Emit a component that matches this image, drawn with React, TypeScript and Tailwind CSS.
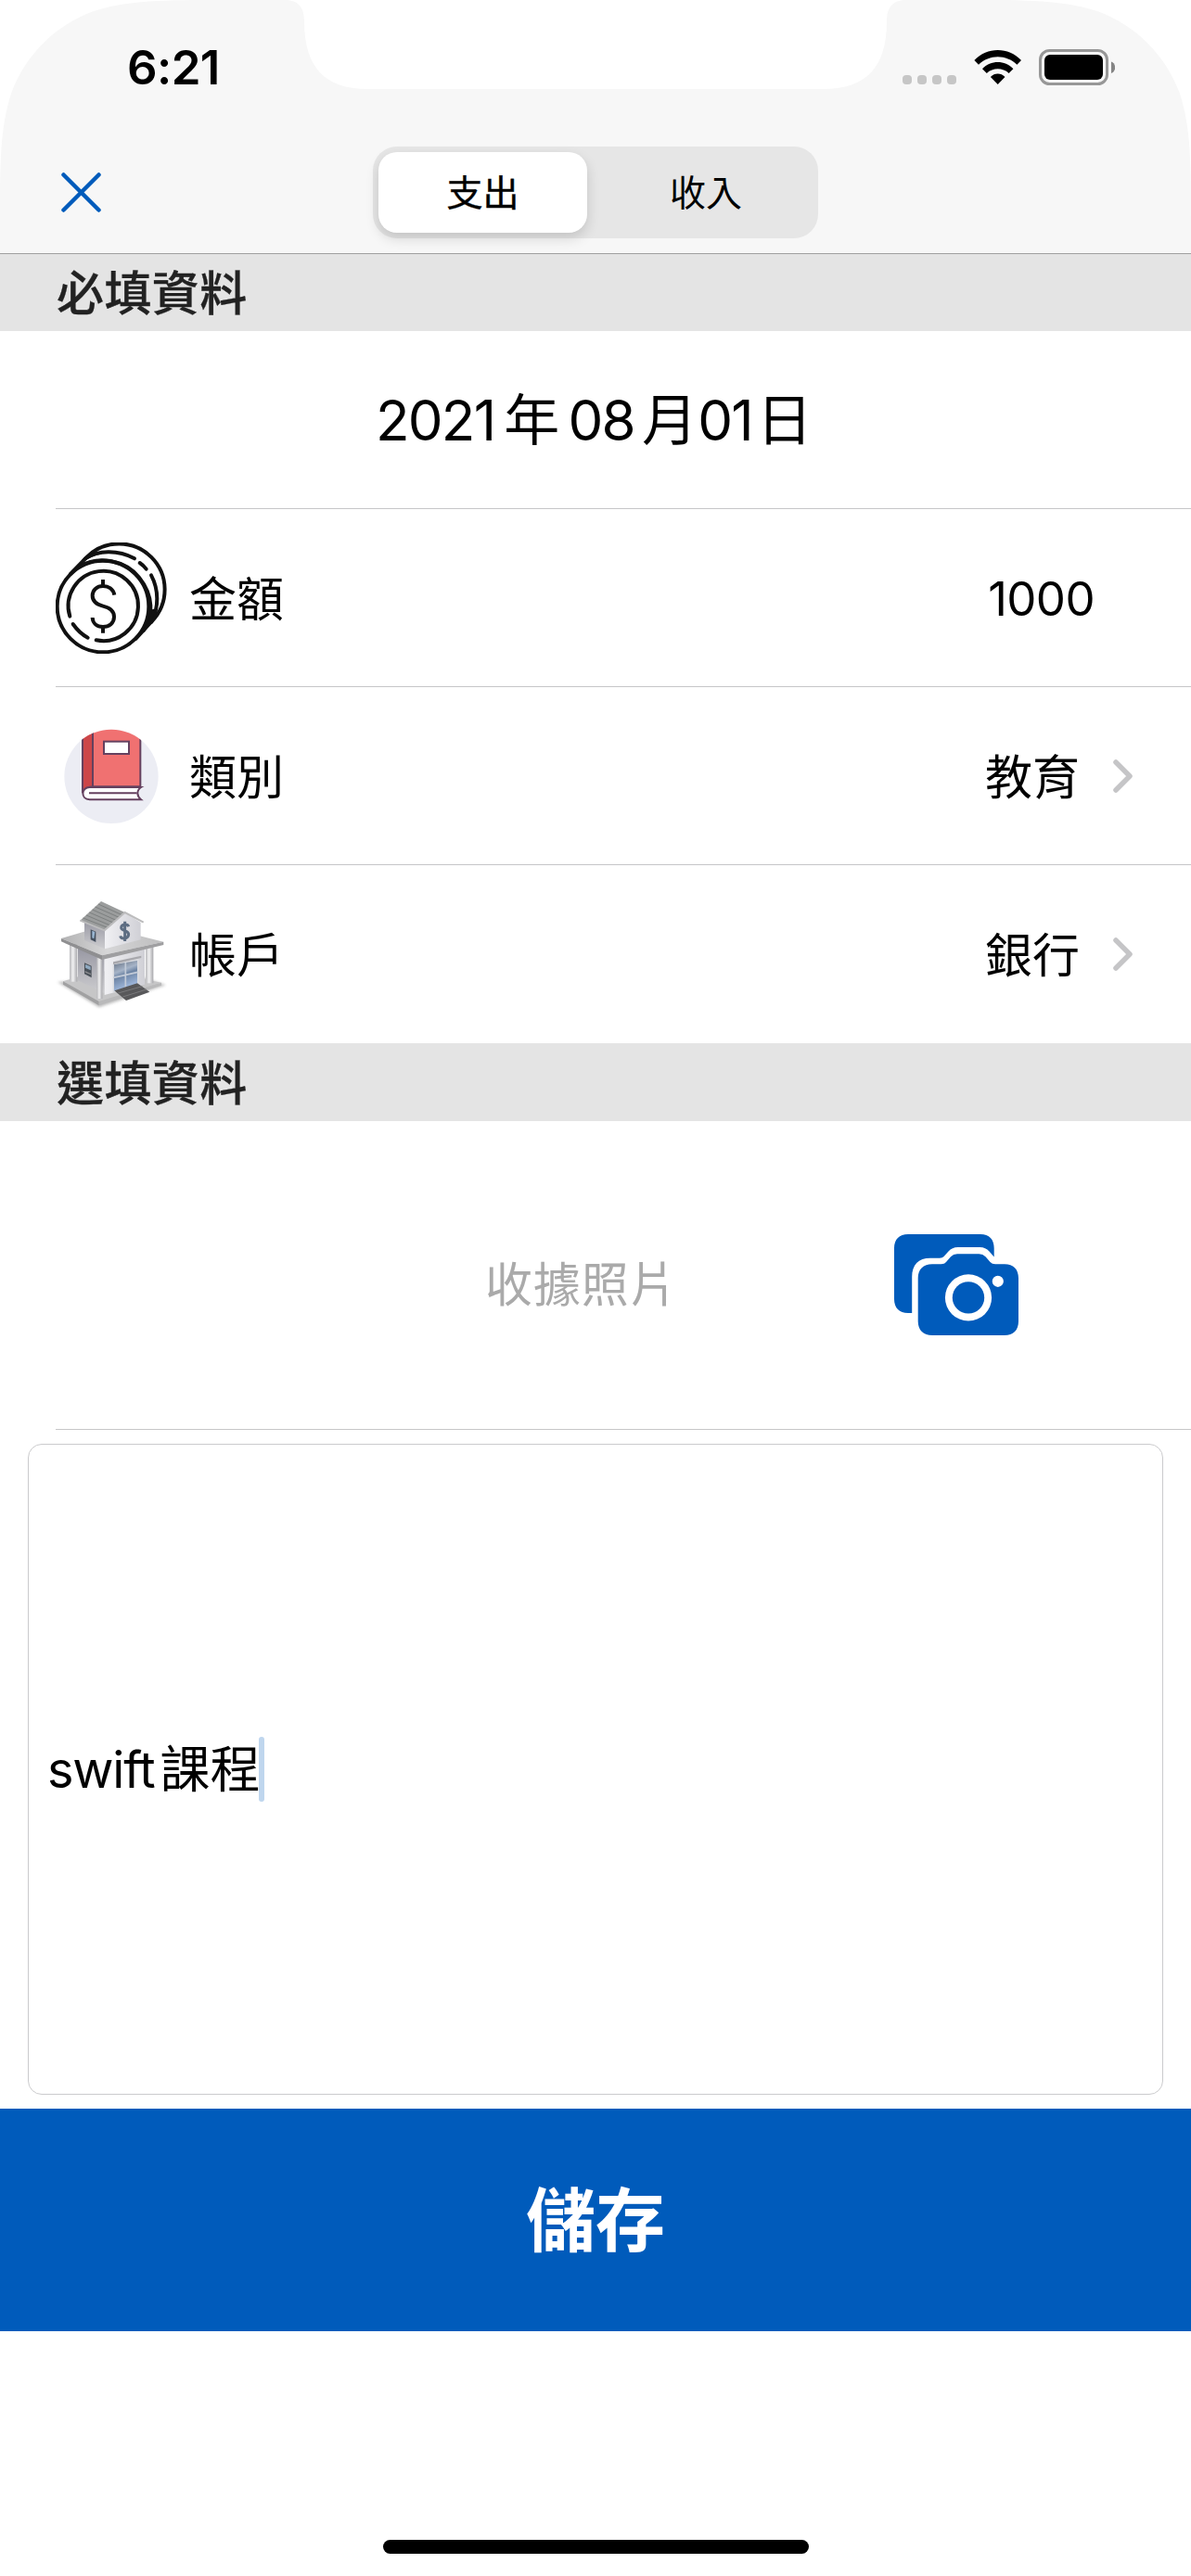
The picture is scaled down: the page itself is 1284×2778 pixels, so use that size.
import type { ReactNode } from "react";

function ScreenCorners() {
  return (
    <svg className="absolute inset-x-0 top-0" width="1284" height="260" viewBox="0 0 1284 260" fill="#fff">
      <path d="M0 0H244.6C174.2 0 138.9 0 101 12C59.7 27 27 59.7 12 101C0 138.9 0 174.2 0 244.6Z" />
      <path d="M1284 0H1039.4C1109.8 0 1145.1 0 1183 12C1224.3 27 1257 59.7 1272 101C1284 138.9 1284 174.2 1284 244.6Z" />
      <path d="M306 0C321 0 328 7 328 23C328 72 350 96 396 96H888C934 96 956 72 956 23C956 7 963 0 978 0Z" />
    </svg>
  );
}

function StatusIcons() {
  return (
    <svg width="230" height="40" viewBox="972 53 230 40">
      {[973, 989, 1005, 1021].map((x) => (
        <rect key={x} x={x} y="81" width="10" height="10" rx="4" fill="#c6c6c6" />
      ))}
      <path d="M1050.4 65.1C1064.2 50.4 1087.2 50.4 1101 65.1L1096.4 69.7C1085 58.3 1066.4 58.3 1055 69.7Z" />
      <path d="M1059 74.2C1068.3 64.6 1083.1 64.6 1092.4 74.2L1087.6 78.9C1081 72.7 1070.4 72.7 1063.8 78.9Z" />
      <path d="M1067.9 82.9C1072.3 78.4 1079.1 78.4 1083.5 82.9L1075.7 91Z" />
      <rect x="1121.5" y="54.5" width="72" height="36" rx="10" fill="none" stroke="#979797" strokeWidth="3" />
      <rect x="1126" y="59" width="63" height="27" rx="6" />
      <path d="M1198 66.5C1203.5 68 1203.5 77.5 1198 79Z" fill="#858585" />
    </svg>
  );
}

function CoinsIcon() {
  return (
    <svg width="120" height="120" viewBox="60 75 360 360" fill="none" stroke="#111" strokeWidth="12" strokeLinecap="round">
      <circle cx="213" cy="282" r="148" />
      <path d="M108 177L162 121A147.8 147.8 0 0 1 371 330L319 387" />
      <path d="M139 152C200 116 285 133 330 188C376 245 378 315 344 360" />
      <path d="M156 127C196 101 259 97 315 127" />
      <path d="M332 141Q344 149 353 161" />
      <path d="M369 181C394 228 394 285 370 332" />
      <path d="M150 131C176 116 190 111 206 109M351 352C366 333 373 314 376 294" strokeWidth="8" />
      <path d="M106 314A113 113 0 1 1 191 391" />
      <path d="M116 339Q137 369 164 383" />
      <path d="M250 245C246 226 231 216 213 216C193 216 179 229 179 247C179 266 193 276 213 281C235 286 249 297 249 316C249 336 233 348 213 348C193 348 180 336 179 318" strokeLinecap="butt" />
      <path d="M213 195V216M213 348V368" strokeLinecap="butt" />
    </svg>
  );
}

function BookIcon() {
  return (
    <svg width="120" height="120" viewBox="60 50 360 360">
      <defs>
        <clipPath id="book-disc">
          <circle cx="240" cy="231" r="152" />
        </clipPath>
      </defs>
      <circle cx="240" cy="231" r="152" fill="#ecedf4" />
      <g clipPath="url(#book-disc)" stroke="#65415f" strokeWidth="6">
        <path d="M147 60H334V264H170Q155 268 147 284Z" fill="#f07171" />
        <path d="M147 60H180V264Q158 264 147 284Z" fill="#cc4649" />
        <rect x="216" y="118" width="81" height="40" fill="#fff" />
        <path d="M336 266H170C142 266 140 305 170 306H336Q326 298 325 286Q325 273 336 266Z" fill="#fff" />
        <path d="M168 285H323" fill="none" />
      </g>
    </svg>
  );
}

function BankIcon() {
  return (
    <svg width="120" height="120" viewBox="60 60 360 360">
      <defs>
        <linearGradient id="bank-slab" x1="0" x2="1">
          <stop offset="0" stopColor="#b2b2b3" />
          <stop offset="0.45" stopColor="#d6d6d7" />
          <stop offset="1" stopColor="#bdbdbe" />
        </linearGradient>
        <linearGradient id="bank-wall" x1="0" x2="1">
          <stop offset="0" stopColor="#f1f1f4" />
          <stop offset="1" stopColor="#d0d0d6" />
        </linearGradient>
        <linearGradient id="bank-side" x1="0" x2="0" y2="1">
          <stop offset="0" stopColor="#9696a1" />
          <stop offset="1" stopColor="#cdcdd0" />
        </linearGradient>
        <linearGradient id="bank-column" x1="0" x2="1">
          <stop offset="0" stopColor="#b9b9bc" />
          <stop offset="0.45" stopColor="#f1f1f2" />
          <stop offset="1" stopColor="#a6a6aa" />
        </linearGradient>
        <linearGradient id="bank-glass" x1="0" x2="0.3" y2="1">
          <stop offset="0" stopColor="#5d6878" />
          <stop offset="0.4" stopColor="#a6b4c8" />
          <stop offset="0.55" stopColor="#6c83a3" />
          <stop offset="1" stopColor="#a6bfe4" />
        </linearGradient>
        <filter id="bank-shadow" x="-20%" y="-20%" width="140%" height="140%">
          <feGaussianBlur stdDeviation="5" />
        </filter>
      </defs>
      <path d="M66 330L200 412L416 340L340 315Z" fill="#999" opacity="0.65" filter="url(#bank-shadow)" />
      <path d="M84 328L200 292L402 332L200 393Z" fill="#c6c6c7" />
      <path d="M84 328L200 393V406L84 338Z" fill="#a1a1a2" />
      <path d="M200 393L402 332V341L200 406Z" fill="#b9b9ba" />
      <path d="M132 215L218 250V367L132 325Z" fill="url(#bank-side)" />
      <path d="M218 250L348 218V338L218 372Z" fill="url(#bank-wall)" />
      <path d="M153 268L176 278V316L153 304Z" fill="#4a5159" />
      <path d="M156 273L173 280V292L156 284Z" fill="#8fa9c0" />
      <path d="M155 294L174 303V307L155 299Z" fill="#8c8c90" />
      <path d="M247 272L326 258V341L247 361Z" fill="url(#bank-glass)" stroke="#d9dbe0" strokeWidth="4" />
      <path d="M286 266V350M247 316L326 298" stroke="#c3cbd8" strokeWidth="5" />
      <path d="M246 265L337 245V252L246 273Z" fill="#a8a8ad" />
      <path d="M250 358L324 334L364 362L288 390Z" fill="#58585a" />
      <path d="M262 366L340 344M277 378L354 354" stroke="#79797b" strokeWidth="3" />
      <rect x="105" y="205" width="25" height="124" fill="url(#bank-column)" />
      <rect x="193" y="243" width="18" height="141" fill="url(#bank-column)" />
      <rect x="351" y="216" width="25" height="118" fill="url(#bank-column)" />
      <path d="M78 189L210 150L409 200L210 244Z" fill="url(#bank-slab)" />
      <path d="M78 189L210 244V258L78 199Z" fill="#8f8f91" />
      <path d="M210 244L409 200V210L210 258Z" fill="#9f9fa1" />
      <path d="M153 130L219 150V223L153 195Z" fill="url(#bank-side)" />
      <path d="M219 155L284 105L335 138V193L219 223Z" fill="url(#bank-wall)" />
      <path d="M139 131L207 69L284 105L218 163Z" fill="#9b9d9d" />
      <path d="M149 123L227 154M159 114L237 147M169 105L246 138M179 96L255 130M188 87L265 121M198 78L274 113" stroke="#7c7f7f" strokeWidth="3" />
      <path d="M139 131L218 163L284 105L344 137" fill="none" stroke="#bcbcbd" strokeWidth="6" />
      <path d="M173 160L190 167V201L173 193Z" fill="#45505f" />
      <path d="M178 164L187 168L184 190L178 187Z" fill="#9ab6d2" />
      <path d="M296 151C292 140 273 143 272 154C272 166 296 162 296 176C295 191 273 194 269 181M284 134V198" fill="none" stroke="#5d6d82" strokeWidth="9" />
    </svg>
  );
}

function CameraIcon() {
  return (
    <svg width="134" height="109" viewBox="0 0 134 109" fill="#005bbb">
      <path d="M15 0H93C102.500 0 107.700 5.500 107.700 15V24.500L102.500 18.500Q98.500 14 92.500 14H68.500Q62.500 14 58.500 18.500L54 23.500Q52 25.700 49 25.700H39C26 25.700 19.200 33 19.200 46V85H15C5.500 85 0 79.500 0 70V15C0 5.500 5.500 0 15 0Z" />
      <path
        fillRule="evenodd"
        d="M41 32.300H50.500Q54 32.300 56 30L61 24.300Q63.800 21.300 68 21.300H91.500Q95.700 21.300 98.500 24.300L103.500 30Q105.500 32.300 109 32.300H119C128.500 32.300 134 37.800 134 47.300V94C134 103.500 128.500 109 119 109H41C31.500 109 25.700 103.500 25.700 94V47.300C25.700 37.800 31.500 32.300 41 32.300ZM80 43.300A25.100 25.100 0 1 0 80 93.500A25.100 25.100 0 1 0 80 43.300ZM111.800 44.700A6.100 6.100 0 1 0 111.800 56.900A6.100 6.100 0 1 0 111.800 44.700Z"
      />
      <circle cx="80" cy="68.400" r="17.200" />
    </svg>
  );
}

function Chevron() {
  return (
    <svg width="21" height="36" viewBox="0 0 21 36" fill="none" stroke="#c5c5c7" strokeWidth="5.500" strokeLinecap="round" strokeLinejoin="round">
      <path d="M3 3L18 18L3 33" />
    </svg>
  );
}

function SectionHeader({ children }: { children: ReactNode }) {
  return (
    <h2 className="flex h-[84px] items-center bg-[#e4e4e4] pt-[3px] pl-[61px] text-[51px] leading-none font-medium tracking-[0.4px] text-[#222] [-webkit-text-stroke:0.3px_#222]">
      {children}
    </h2>
  );
}

type RowProps = { icon: ReactNode; label: string; value: string; chevron?: boolean; last?: boolean };

function Row({ icon, label, value, chevron, last }: RowProps) {
  return (
    <div
      className={`ml-[60px] flex h-[192px] items-center text-[51px] leading-none ${last ? "" : "border-b border-[#c6c6c8]"}`}
    >
      {icon}
      <span className="ml-[24px] flex-1 pt-[3px]">{label}</span>
      {chevron ? (
        <>
          <span className="mr-[36px] pt-[3px]">{value}</span>
          <span className="mr-[63px]">
            <Chevron />
          </span>
        </>
      ) : (
        <span className="mr-[104px] pt-[2px] tracking-[-0.6px]">{value}</span>
      )}
    </div>
  );
}

export default function App() {
  return (
    <div
      lang="zh-Hant"
      className="relative flex h-[2778px] w-[1284px] flex-col overflow-hidden bg-white font-['Inter','Noto_Sans_CJK_TC',sans-serif] text-black"
    >
      <header className="relative h-[274px] border-b border-[#a0a0a0] bg-[#f7f7f7]">
        <ScreenCorners />
        <div className="relative flex h-[146px] items-start justify-between pr-[82px] pl-[137px]">
          <span className="mt-[47px] text-[51px] leading-[52px] font-semibold tracking-[-0.6px]">6:21</span>
          <span className="mt-[53px]">
            <StatusIcons />
          </span>
        </div>
        <div className="relative flex items-start justify-center pt-3">
          <button aria-label="close" className="absolute top-[40px] left-[66px]">
            <svg width="43" height="43" viewBox="0 0 43 43" fill="none" stroke="#005bbb" strokeWidth="4.500" strokeLinecap="round">
              <path d="M2.500 2.500L40.500 40.500M40.500 2.500L2.500 40.500" />
            </svg>
          </button>
          <div className="flex h-[99px] w-[480px] rounded-[26px] bg-[#e6e6e6] p-[6px] text-[39px] leading-none">
            <div className="flex h-[87px] w-[225px] items-center justify-center rounded-[20px] bg-white shadow-[0_6px_14px_rgba(0,0,0,0.15)] [-webkit-text-stroke:0.4px_#000]">
              支出
            </div>
            <div className="flex h-[87px] flex-1 items-center justify-center pl-[13px]">收入</div>
          </div>
        </div>
      </header>

      <main className="flex flex-col">
        <div className="-mt-px">
          <SectionHeader>必填資料</SectionHeader>
        </div>
        <div className="ml-[60px] flex h-[192px] items-center justify-center border-b border-[#c6c6c8] pr-[65px] text-[60px] leading-none">
          <span className="tracking-[-1.8px]">
            2021<span className="mr-[-4px] ml-[10px]">年</span> 08<span className="mr-[2px] ml-[8px]">月</span>01
            <span className="ml-[5px]">日</span>
          </span>
        </div>
        <Row icon={<CoinsIcon />} label="金額" value="1000" />
        <Row icon={<BookIcon />} label="類別" value="教育" chevron />
        <Row icon={<BankIcon />} label="帳戶" value="銀行" chevron last />
        <SectionHeader>選填資料</SectionHeader>
        <div className="ml-[60px] flex h-[333px] items-center border-b border-[#c6c6c8] pl-[463px]">
          <span className="w-[441px] pt-[20px] text-[51px] leading-none tracking-[0.9px] text-[#aaa]">收據照片</span>
          <span className="pt-[20px]">
            <CameraIcon />
          </span>
        </div>
        <div className="mx-[30px] mt-[15px] flex h-[702px] items-center rounded-[15px] border border-[#cbcbcd] pl-[20px]">
          <span className="pt-[2px] text-[54px] leading-none tracking-[-1.2px]">swift</span>
          <span className="ml-[6px] pt-[2px] text-[54px] leading-none">課程</span>
          <span className="-ml-[2px] h-[70px] w-[6px] rounded-full bg-[#bfd6ee]" />
        </div>
        <button className="mt-[15px] h-[240px] bg-[#005bbb] text-[75px] leading-none font-bold text-white">儲存</button>
      </main>

      <div className="mt-auto mb-6 h-[15px] w-[459px] self-center rounded-full bg-black" />
    </div>
  );
}
